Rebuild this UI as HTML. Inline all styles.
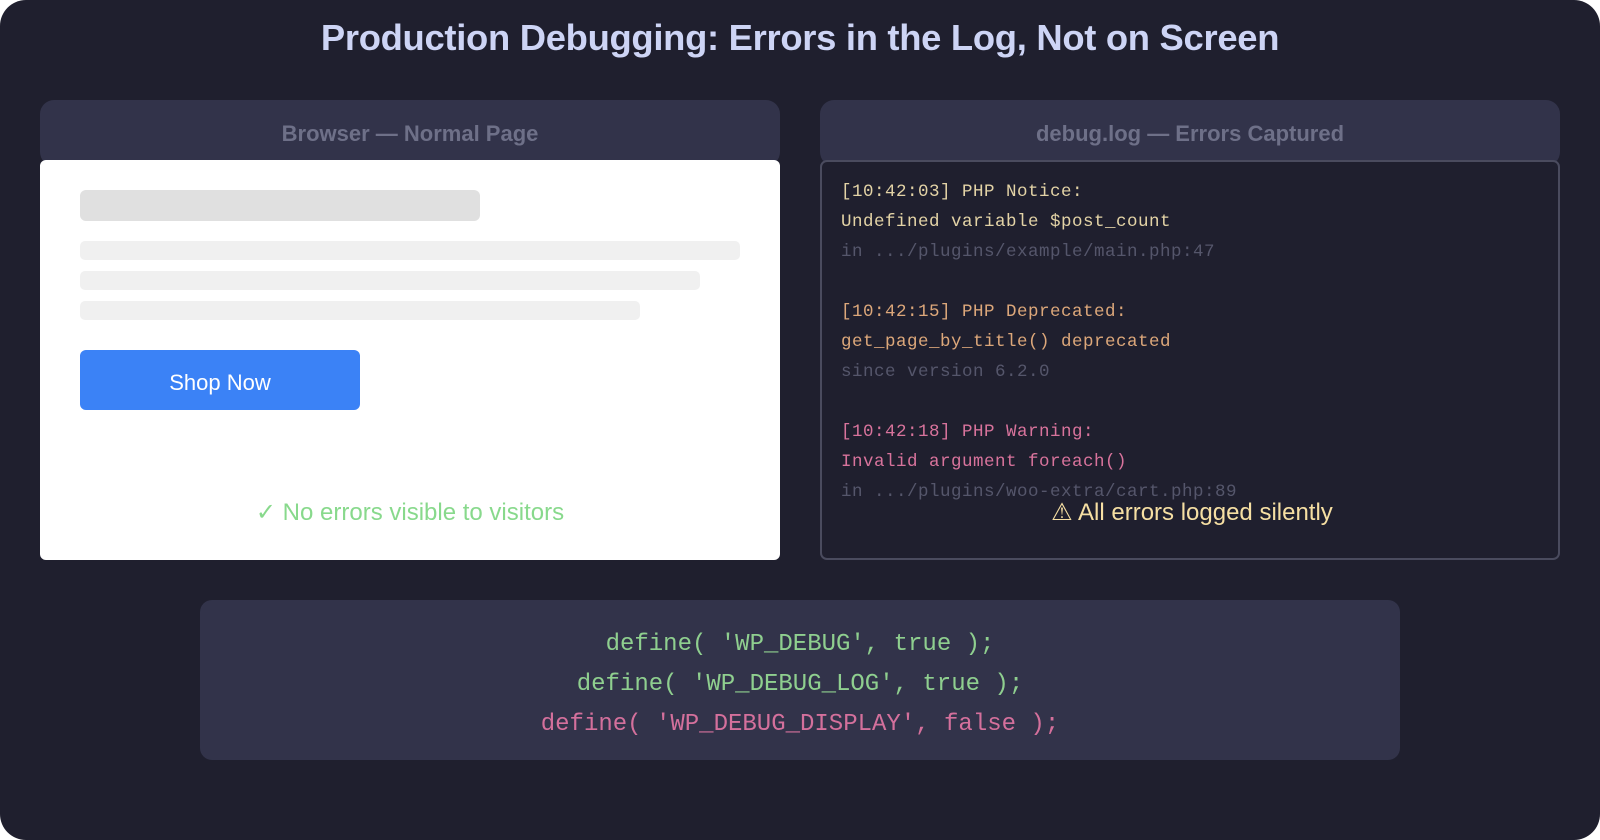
<!DOCTYPE html>
<html><head><meta charset="utf-8"><style>
*{margin:0;padding:0;box-sizing:border-box}
body{width:1600px;height:840px;background:#fff;overflow:hidden;font-family:"Liberation Sans",sans-serif}
.wrap{position:absolute;left:0;top:0;width:1600px;height:840px;background:#1f1f2e;border-radius:26px}
.title{position:absolute;top:17px;left:0;width:1600px;text-align:center;color:#cdd4f5;font-weight:bold;font-size:36.4px;letter-spacing:-0.3px}
.hdr{position:absolute;top:100px;height:66px;width:740px;background:#32334a;border-radius:14px;color:#6e7088;font-weight:bold;font-size:22px;text-align:center;line-height:66px;padding-bottom:6px}
.hdr span{position:relative;top:1px}
.white{position:absolute;left:40px;top:160px;width:740px;height:400px;background:#fff;border-radius:6px}
.bar{position:absolute;border-radius:6px}
.btn{position:absolute;left:40px;top:190px;width:280px;height:60px;background:#3b82f6;border-radius:6px;color:#fff;font-size:22px;text-align:center;line-height:66px}
.ok{position:absolute;left:0;width:740px;top:338px;text-align:center;color:#88d98c;font-size:24px}
.log{position:absolute;left:820px;top:160px;width:740px;height:400px;border:2px solid #4a4b5e;border-radius:7px;background:#1f1f2e}
.ln{position:absolute;left:19px;font-family:"Liberation Mono",monospace;font-size:17.5px;letter-spacing:0.5px;white-space:pre}
.warn{position:absolute;left:0;width:740px;top:336px;text-align:center;color:#f6dfa3;font-size:24px}
.code{position:absolute;left:200px;top:600px;width:1200px;height:160px;background:#32334a;border-radius:12px}
.cl{position:absolute;left:0;width:1200px;text-align:center;font-family:"Liberation Mono",monospace;font-size:24px;white-space:pre}
</style></head><body><div class="wrap">
<div class="title">Production Debugging: Errors in the Log, Not on Screen</div>
<div class="hdr" style="left:40px"><span>Browser — Normal Page</span></div>
<div class="hdr" style="left:820px"><span>debug.log — Errors Captured</span></div>
<div class="white">
<div class="bar" style="left:40px;top:30px;width:400px;height:31px;background:#e0e0e0"></div>
<div class="bar" style="left:40px;top:81px;width:660px;height:19px;background:#f0f0f0;border-radius:5px"></div>
<div class="bar" style="left:40px;top:111px;width:620px;height:19px;background:#f0f0f0;border-radius:5px"></div>
<div class="bar" style="left:40px;top:141px;width:560px;height:19px;background:#f0f0f0;border-radius:5px"></div>
<div class="btn">Shop Now</div>
<div class="ok">✓ No errors visible to visitors</div>
</div>
<div class="log">
<div class="ln" style="top:20px;color:#e3d3a6">[10:42:03] PHP Notice:</div>
<div class="ln" style="top:50px;color:#e3d3a6">Undefined variable $post_count</div>
<div class="ln" style="top:80px;color:#55566b">in .../plugins/example/main.php:47</div>
<div class="ln" style="top:140px;color:#dca77a">[10:42:15] PHP Deprecated:</div>
<div class="ln" style="top:170px;color:#dca77a">get_page_by_title() deprecated</div>
<div class="ln" style="top:200px;color:#55566b">since version 6.2.0</div>
<div class="ln" style="top:260px;color:#d8739c">[10:42:18] PHP Warning:</div>
<div class="ln" style="top:290px;color:#d8739c">Invalid argument foreach()</div>
<div class="ln" style="top:320px;color:#55566b">in .../plugins/woo-extra/cart.php:89</div>
<div class="warn">⚠ All errors logged silently</div>
</div>
<div class="code">
<div class="cl" style="top:31px;color:#8fcf8f">define( 'WP_DEBUG', true );</div>
<div class="cl" style="top:71px;color:#8fcf8f">define( 'WP_DEBUG_LOG', true );</div>
<div class="cl" style="top:111px;color:#d4709c">define( 'WP_DEBUG_DISPLAY', false );</div>
</div>
</div></body></html>
